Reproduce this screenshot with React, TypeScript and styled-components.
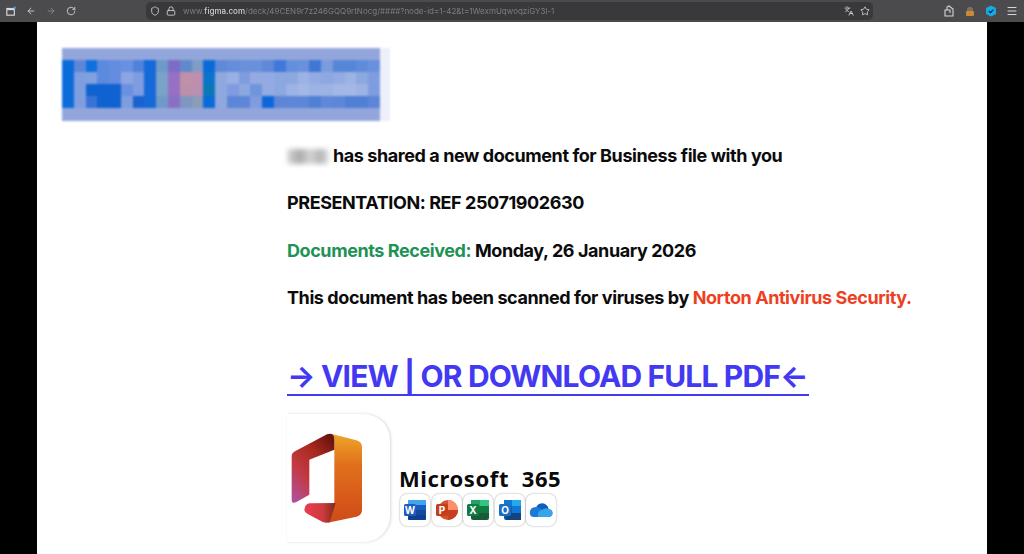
import * as React from 'react';
import styled, { createGlobalStyle } from 'styled-components';
import { ArrowLeft, ArrowRight, RotateCw, Shield, Lock, Languages, Star, Menu } from 'lucide-react';

const GlobalStyle = createGlobalStyle`
  html, body {
    margin: 0;
    padding: 0;
    width: 1024px;
    height: 554px;
    overflow: hidden;
    background: #000;
    font-family: Inter, "Liberation Sans", sans-serif;
  }
`;

const Screen = styled.div`
  width: 1024px;
  height: 554px;
  display: flex;
  flex-direction: column;
  overflow: hidden;
  background: #000;
`;

const Toolbar = styled.header`
  height: 22px;
  flex: none;
  display: flex;
  align-items: center;
  background: #4b4b4d;
  color: #d6d6d6;
  filter: blur(0.5px);
`;

const NavGroup = styled.div`
  width: 146px;
  flex: none;
  display: flex;
  align-items: center;
  gap: 10px;
  padding-left: 6px;
  box-sizing: border-box;
`;

const NavIcon = styled.span<{ $dim?: boolean }>`
  display: flex;
  width: 10px;
  justify-content: center;
  color: ${(props) => (props.$dim ? '#8c8c8c' : '#d6d6d6')};
`;

const AddressBar = styled.div`
  width: 727px;
  height: 18px;
  flex: none;
  display: flex;
  align-items: center;
  gap: 6px;
  padding: 0 3px;
  box-sizing: border-box;
  border-radius: 5px;
  background: #39393b;
  svg:first-child {
    margin-left: 1px;
  }
`;

const Url = styled.div`
  flex: 1;
  margin-left: 1px;
  font-size: 8px;
  white-space: nowrap;
  overflow: hidden;
  color: #7d7d7d;
  b {
    font-weight: 500;
    color: #cfcfcf;
  }
`;

const Extensions = styled.div`
  flex: 1;
  display: flex;
  align-items: center;
  justify-content: flex-end;
  gap: 9px;
  padding-right: 6px;
`;

const Viewport = styled.main`
  width: 950px;
  height: 532px;
  margin-left: 37px;
  background: #fff;
  box-sizing: border-box;
  padding-top: 26px;
  overflow: hidden;
`;

const LogoFrame = styled.div`
  width: 318px;
  height: 73px;
  margin-left: 25px;
  padding: 12px 0 13px;
  box-sizing: border-box;
  background: #93a6dc;
  box-shadow: 10px 0 0 #eef0f9;
  filter: blur(1.2px);
`;

const LogoCells = styled.div`
  display: grid;
  grid-template-columns: repeat(27, 1fr);
  grid-auto-rows: 12px;
`;

const LogoCell = styled.i<{ $c: string }>`
  display: block;
  background: ${(props) => props.$c};
`;

const Message = styled.section`
  margin: 23px 0 0 250px;
  display: flex;
  flex-direction: column;
  gap: 23.4px;
`;

const Line = styled.p`
  margin: 0;
  height: 24px;
  display: flex;
  align-items: center;
  gap: 4px;
  font-size: 18px;
  line-height: 24px;
  font-weight: 650;
  letter-spacing: -0.42px;
  color: #0b0b0b;
  white-space: pre;
`;

const BlurredName = styled.span`
  width: 42px;
  height: 15px;
  border-radius: 3px;
  background: linear-gradient(90deg, #d8d8d8, #aaa 30%, #d5d5d5 55%, #b4b4b4 80%, #e4e4e4);
  filter: blur(2.5px);
`;

const Accent = styled.span<{ $color: string }>`
  color: ${(props) => props.$color};
`;

const ViewLink = styled.div`
  width: 522px;
  height: 38px;
  margin: 48px 0 0 250px;
  font-size: 30px;
  line-height: 36px;
  font-weight: 650;
  letter-spacing: -0.85px;
  color: #4339f2;
  border-bottom: 2px solid #4339f2;
  box-sizing: border-box;
  white-space: pre;
`;

const Brand = styled.section`
  margin: 18px 0 0 250px;
  display: flex;
  align-items: flex-start;
`;

const OfficeCard = styled.div`
  width: 103px;
  height: 128px;
  flex: none;
  display: flex;
  align-items: center;
  padding-left: 4px;
  box-sizing: border-box;
  background: #fff;
  border-radius: 0 26px 26px 0;
  box-shadow: 1px 0 3px rgba(0, 0, 0, 0.16);
`;

const Suite = styled.div`
  margin: 50px 0 0 9px;
`;

const SuiteTitle = styled.div`
  font-family: "Noto Sans", sans-serif;
  font-size: 22px;
  line-height: 28px;
  font-weight: 700;
  letter-spacing: 0.6px;
  color: #0a0a0a;
  white-space: pre;
`;

const AppRow = styled.div`
  display: flex;
  gap: 1.5px;
  margin: 2px 0 0 1px;
`;

const AppTile = styled.div`
  width: 30px;
  height: 32px;
  display: flex;
  align-items: center;
  justify-content: center;
  border-radius: 7px;
  background: #fff;
  box-shadow: 0 0 2px rgba(0, 0, 0, 0.4);
`;

const logoRows = [
  ['#0b6bd9', '#5d86d8', '#0f70dd', '#5c8ade', '#648ce0', '#6a90e0', '#4f82d8', '#1669d8', '#6f9ac8', '#7c6cc8', '#5f8cc8', '#7f9cc8', '#0a6ad8', '#5f8ad8', '#668dda', '#6a90dc', '#6a90dc', '#5f88d8', '#3f78d8', '#6390dc', '#6a90dc', '#3f78d4', '#7b9cdc', '#5586d8', '#5586d8', '#5f8cd8', '#6a90dc'],
  ['#0b6bd9', '#7f9edf', '#80a0e0', '#5c8ade', '#648ce0', '#8da6e2', '#7d9de0', '#1669d8', '#7ba2c8', '#9570c4', '#c090a8', '#bf8eb0', '#0a74cc', '#8fa8e0', '#9ab0e4', '#7f9cdf', '#93abe2', '#93abe2', '#8ca8e0', '#8ca8e0', '#9db3e4', '#93abe2', '#8ca8e0', '#93abe2', '#9db3e4', '#8ca8e0', '#7f9cdf'],
  ['#0b6bd9', '#7f9edf', '#0f62cf', '#0f62d0', '#0f62d0', '#6a90e0', '#7d9de0', '#1669d8', '#7ba2c8', '#9570c4', '#bc90a8', '#bc8eb0', '#0a78b8', '#8fa8e0', '#7f9cdf', '#8ca8e0', '#6e96dc', '#93abe2', '#8ca8e0', '#9db3e4', '#a4b8e6', '#9db3e4', '#9db3e4', '#a4b8e6', '#a4b8e6', '#9db3e4', '#7f9cdf'],
  ['#0b6bd9', '#7f9edf', '#3872d6', '#0f62d0', '#0f62d0', '#7d9de0', '#1a62d0', '#1669d8', '#6f9ac8', '#8a70c4', '#7f96c0', '#8a9cb8', '#0a6ad8', '#8fa8e0', '#5d86d8', '#5d86d8', '#7f9cdf', '#0f66d8', '#5d86d8', '#5d86d8', '#5d86d8', '#5080d4', '#6088d8', '#5d86d8', '#5080d4', '#5080d4', '#5d86d8'],
];

const OfficeLogo = () => (
  <svg width='71' height='90' viewBox='30 85 213 270'>
    <defs>
      <linearGradient id='officeLeft' x1='0.1' y1='1' x2='0.8' y2='0'>
        <stop offset='0' stopColor='#b0509c' />
        <stop offset='0.35' stopColor='#c23a44' />
        <stop offset='0.7' stopColor='#a92a1e' />
        <stop offset='1' stopColor='#6e1410' />
      </linearGradient>
      <linearGradient id='officeRight' x1='0.5' y1='0' x2='0.5' y2='1'>
        <stop offset='0' stopColor='#eea62a' />
        <stop offset='0.35' stopColor='#e0701c' />
        <stop offset='1' stopColor='#cf4a18' />
      </linearGradient>
      <linearGradient id='officeBottom' x1='0' y1='0' x2='1' y2='0'>
        <stop offset='0' stopColor='#ea3d50' />
        <stop offset='0.6' stopColor='#cc3a3c' />
        <stop offset='1' stopColor='#7c2a1c' />
      </linearGradient>
    </defs>
    <path d='M150 87 L226 107 Q243 112 243 128 V316 Q243 332 226 336 L140 354 L160 296 V105 Q160 92 150 87 Z' fill='url(#officeRight)' />
    <path d='M70 316 Q72 298 85 296 L164 295 L146 353 Q135 356 125 352 L80 328 Q70 322 70 316 Z' fill='url(#officeBottom)' />
    <path d='M32 155 Q32 145 42 140 L138 89 Q160 82 160 105 V135 L85 165 V270 L45 293 Q32 298 32 285 Z' fill='url(#officeLeft)' />
  </svg>
);

const TileLetter = ({ x, y, w, fill, label }: { x: number; y: number; w: number; fill: string; label: string }) => (
  <g>
    <rect x={x} y={y} width={w} height={w} rx='1.5' fill={fill} />
    <text x={x + w / 2} y={y + w - 2.5} fontSize={w - 2} fontWeight='700' fontFamily='Inter, sans-serif' textAnchor='middle' fill='#fff'>
      {label}
    </text>
  </g>
);

const WordIcon = () => (
  <svg width='24' height='22' viewBox='0 0 24 22'>
    <rect x='5' y='1' width='18' height='20' rx='2' fill='#2b7cd3' />
    <rect x='5' y='6' width='18' height='5' fill='#185abd' />
    <rect x='5' y='11' width='18' height='5' fill='#124a9e' />
    <rect x='5' y='16' width='18' height='5' rx='1' fill='#103f91' />
    <rect x='5' y='1' width='18' height='5' rx='1' fill='#41a5ee' />
    <TileLetter x={1} y={5} w={12} fill='#1d5cc0' label='W' />
  </svg>
);

const PowerPointIcon = () => (
  <svg width='24' height='22' viewBox='0 0 24 22'>
    <circle cx='13' cy='11' r='10' fill='#d35230' />
    <path d='M13 1 A10 10 0 0 1 23 11 H13 Z' fill='#ff8f6b' />
    <path d='M13 11 H23 A10 10 0 0 1 13 21 Z' fill='#c4401e' />
    <TileLetter x={1} y={5} w={12} fill='#c43e1c' label='P' />
  </svg>
);

const ExcelIcon = () => (
  <svg width='24' height='22' viewBox='0 0 24 22'>
    <rect x='5' y='1' width='18' height='20' rx='2' fill='#185c37' />
    <rect x='14' y='1' width='9' height='6' fill='#33c481' />
    <rect x='5' y='1' width='9' height='6' fill='#21a366' />
    <rect x='14' y='7' width='9' height='7' fill='#107c41' />
    <rect x='5' y='7' width='9' height='7' fill='#107c41' />
    <TileLetter x={1} y={5} w={12} fill='#107c41' label='X' />
  </svg>
);

const OutlookIcon = () => (
  <svg width='24' height='22' viewBox='0 0 24 22'>
    <rect x='6' y='1' width='17' height='20' rx='2' fill='#0a5ea8' />
    <rect x='14' y='1' width='9' height='6' fill='#28a8ea' />
    <rect x='6' y='1' width='8' height='6' fill='#0f78d4' />
    <rect x='14' y='7' width='9' height='7' fill='#0f78d4' />
    <rect x='8' y='14' width='15' height='7' fill='#14447d' />
    <TileLetter x={1} y={5} w={12} fill='#1b6ec2' label='O' />
  </svg>
);

const OneDriveIcon = () => (
  <svg width='24' height='16' viewBox='0 0 24 16'>
    <path d='M5 15 H19 Q23.5 15 23.5 11 Q23.5 7.5 19.5 7 Q18 1.5 13 1.5 Q9 1.5 7.5 5 Q1 5 0.8 10.5 Q0.8 15 5 15 Z' fill='#1a7ad6' />
    <path d='M7.5 5 Q11 5 13 7.5 L15 6.5 Q17.5 6 19.5 7 Q18 1.5 13 1.5 Q9 1.5 7.5 5 Z' fill='#0f5fb8' />
    <path d='M9 15 H19 Q23.5 15 23.5 11 Q23.5 8 20 7 Q16 5.5 13 8 Q8 8.5 9 15 Z' fill='#35a6ea' />
  </svg>
);

const WindowIcon = () => (
  <svg width='12' height='12' viewBox='0 0 12 12'>
    <rect x='1' y='3' width='9' height='8' fill='none' stroke='#d6d6d6' strokeWidth='1.4' />
    <rect x='1' y='3' width='9' height='2' fill='#d6d6d6' />
    <circle cx='10.5' cy='2' r='1.5' fill='#3aa0f0' />
  </svg>
);

const ShareIcon = () => (
  <svg width='12' height='12' viewBox='0 0 12 12'>
    <path d='M2 11 V5 H4 V2 L6 1 L10 4 V11 Z M4 5 L7 5 V8' fill='none' stroke='#d6d6d6' strokeWidth='1.1' />
  </svg>
);

const BundleIcon = () => (
  <svg width='12' height='12' viewBox='0 0 12 12'>
    <rect x='2' y='6' width='8' height='5' rx='1' fill='#c98a30' />
    <path d='M3 6 V3.5 Q6 0 9 3.5 V6' fill='#7a726a' />
  </svg>
);

const HexIcon = () => (
  <svg width='12' height='12' viewBox='0 0 12 12'>
    <path d='M6 0.5 L11 3 V9 L6 11.5 L1 9 V3 Z' fill='#16a9e8' />
    <path d='M3.8 6 L5.5 7.6 L8.4 4.6' fill='none' stroke='#123' strokeWidth='1.2' />
  </svg>
);

export default () => (
  <Screen>
    <GlobalStyle />
    <Toolbar>
      <NavGroup>
        <NavIcon><WindowIcon /></NavIcon>
        <NavIcon><ArrowLeft size={10} /></NavIcon>
        <NavIcon $dim><ArrowRight size={10} /></NavIcon>
        <NavIcon><RotateCw size={10} /></NavIcon>
      </NavGroup>
      <AddressBar>
        <Shield size={10} />
        <Lock size={10} />
        <Url>
          www.<b>figma.com</b>/deck/49CEN9r7z246GQQ9rtNocg/####?node-id=1-42&amp;t=1WexmUqwoqziGY3l-1
        </Url>
        <Languages size={10} />
        <Star size={10} />
      </AddressBar>
      <Extensions>
        <ShareIcon />
        <BundleIcon />
        <HexIcon />
        <Menu size={12} />
      </Extensions>
    </Toolbar>
    <Viewport>
      <LogoFrame>
        <LogoCells>
          {logoRows.flat().map((c, i) => (
            <LogoCell key={i} $c={c} />
          ))}
        </LogoCells>
      </LogoFrame>
      <Message>
        <Line>
          <BlurredName />
          has shared a new document for Business file with you
        </Line>
        <Line>PRESENTATION: REF 25071902630</Line>
        <Line>
          <span>
            <Accent $color='#1f9256'>Documents Received:</Accent> Monday, 26 January 2026
          </span>
        </Line>
        <Line>
          <span>
            This document has been scanned for viruses by <Accent $color='#ee3f22'>Norton Antivirus Security.</Accent>
          </span>
        </Line>
      </Message>
      <ViewLink>→ VIEW | OR DOWNLOAD FULL PDF←</ViewLink>
      <Brand>
        <OfficeCard>
          <OfficeLogo />
        </OfficeCard>
        <Suite>
          <SuiteTitle>Microsoft  365</SuiteTitle>
          <AppRow>
            <AppTile><WordIcon /></AppTile>
            <AppTile><PowerPointIcon /></AppTile>
            <AppTile><ExcelIcon /></AppTile>
            <AppTile><OutlookIcon /></AppTile>
            <AppTile><OneDriveIcon /></AppTile>
          </AppRow>
        </Suite>
      </Brand>
    </Viewport>
  </Screen>
);
